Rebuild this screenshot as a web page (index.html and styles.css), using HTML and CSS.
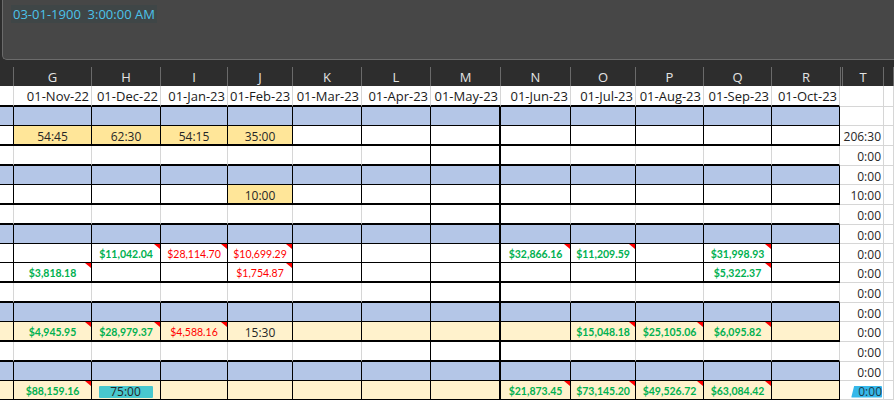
FILE: index.html
```html
<!DOCTYPE html>
<html lang="en">
<head>
  <meta charset="UTF-8">
  <title>Hours sheet</title>
  <link rel="stylesheet" href="styles.css">
</head>
<body>
  <div class="topbar">
    <div class="formula"><span class="formula-text">03-01-1900&nbsp; 3:00:00 AM</span></div>
  </div>
  <table class="sheet">
    <colgroup>
      <col style="width:14px">
      <col style="width:78px">
      <col style="width:69px">
      <col style="width:67px">
      <col style="width:65px">
      <col style="width:69px">
      <col style="width:69px">
      <col style="width:70px">
      <col style="width:70px">
      <col style="width:65px">
      <col style="width:68px">
      <col style="width:68px">
      <col style="width:68px">
      <col style="width:44px">
      <col style="width:10px">
    </colgroup>
    <thead>
      <tr>
        <th></th><th>G</th><th>H</th><th>I</th><th>J</th><th>K</th><th>L</th><th>M</th>
        <th>N</th><th>O</th><th>P</th><th>Q</th><th class="last">R</th><th class="hid">T</th><th></th>
      </tr>
    </thead>
    <tbody>
      <tr class="dates">
        <td></td><td>01-Nov-22</td><td>01-Dec-22</td><td>01-Jan-23</td><td>01-Feb-23</td><td>01-Mar-23</td><td>01-Apr-23</td>
        <td>01-May-23</td><td>01-Jun-23</td><td>01-Jul-23</td><td>01-Aug-23</td><td>01-Sep-23</td><td>01-Oct-23</td><td></td><td></td>
      </tr>
      <tr class="grp band thin">
        <td></td><td></td><td></td><td></td><td></td><td></td><td></td><td></td><td></td><td></td><td></td><td></td><td></td><td></td><td></td>
      </tr>
      <tr class="grp thick">
        <td></td><td class="gold">54:45</td><td class="gold">62:30</td><td class="gold">54:15</td><td class="gold">35:00</td>
        <td></td><td></td><td></td><td></td><td></td><td></td><td></td><td></td><td>206:30</td><td></td>
      </tr>
      <tr class="spacer thick">
        <td></td><td></td><td></td><td></td><td></td><td></td><td></td><td></td><td></td><td></td><td></td><td></td><td></td><td>0:00</td><td></td>
      </tr>
      <tr class="grp band thin">
        <td></td><td></td><td></td><td></td><td></td><td></td><td></td><td></td><td></td><td></td><td></td><td></td><td></td><td>0:00</td><td></td>
      </tr>
      <tr class="grp thick">
        <td></td><td></td><td></td><td></td><td class="gold">10:00</td><td></td><td></td><td></td><td></td><td></td><td></td><td></td><td></td><td>10:00</td><td></td>
      </tr>
      <tr class="spacer thick">
        <td></td><td></td><td></td><td></td><td></td><td></td><td></td><td></td><td></td><td></td><td></td><td></td><td></td><td>0:00</td><td></td>
      </tr>
      <tr class="grp band thin">
        <td></td><td></td><td></td><td></td><td></td><td></td><td></td><td></td><td></td><td></td><td></td><td></td><td></td><td>0:00</td><td></td>
      </tr>
      <tr class="grp thin">
        <td></td><td></td><td class="up note">$11,042.04</td><td class="down note">$28,114.70</td><td class="down note">$10,699.29</td>
        <td></td><td></td><td></td><td class="up note">$32,866.16</td><td class="up note">$11,209.59</td><td></td><td class="up note">$31,998.93</td><td></td><td>0:00</td><td></td>
      </tr>
      <tr class="grp thick">
        <td></td><td class="up note">$3,818.18</td><td></td><td></td><td class="down note">$1,754.87</td>
        <td></td><td></td><td></td><td></td><td></td><td></td><td class="up note">$5,322.37</td><td></td><td>0:00</td><td></td>
      </tr>
      <tr class="spacer thick">
        <td></td><td></td><td></td><td></td><td></td><td></td><td></td><td></td><td></td><td></td><td></td><td></td><td></td><td>0:00</td><td></td>
      </tr>
      <tr class="grp band thin">
        <td></td><td></td><td></td><td></td><td></td><td></td><td></td><td></td><td></td><td></td><td></td><td></td><td></td><td>0:00</td><td></td>
      </tr>
      <tr class="grp cream thick">
        <td></td><td class="up note">$4,945.95</td><td class="up note">$28,979.37</td><td class="down note">$4,588.16</td><td>15:30</td>
        <td></td><td></td><td></td><td></td><td class="up note">$15,048.18</td><td class="up note">$25,105.06</td><td class="up note">$6,095.82</td><td></td><td>0:00</td><td></td>
      </tr>
      <tr class="spacer thick">
        <td></td><td></td><td></td><td></td><td></td><td></td><td></td><td></td><td></td><td></td><td></td><td></td><td></td><td>0:00</td><td></td>
      </tr>
      <tr class="grp band thin">
        <td></td><td></td><td></td><td></td><td></td><td></td><td></td><td></td><td></td><td></td><td></td><td></td><td></td><td>0:00</td><td></td>
      </tr>
      <tr class="grp cream thin">
        <td></td><td class="up note">$88,159.16</td><td><span class="marker">75:00</span></td><td></td><td></td>
        <td></td><td></td><td></td><td class="up note">$21,873.45</td><td class="up note">$73,145.20</td><td class="up note">$49,526.72</td><td class="up note">$63,084.42</td><td></td>
        <td><span class="marker marker-blue">0:00</span></td><td></td>
      </tr>
    </tbody>
  </table>
</body>
</html>
```

FILE: styles.css
```css
* {
  box-sizing: border-box;
}

body {
  margin: 0;
  background: #fff;
  font-family: "Open Sans", sans-serif;
  overflow: hidden;
}

.topbar {
  background: #2d2d2d;
  padding: 0 0 7px 2px;
}

.formula {
  height: 60px;
  background: #474747;
  border: 1px solid #6b6b6b;
  border-top: 0;
  border-right: 0;
  border-bottom-left-radius: 5px;
  padding: 2px 0 0 8px;
}

.formula-text {
  display: inline-block;
  padding: 0 2px;
  background: #3f4647;
  color: #4cc3ea;
  font-size: 13px;
  line-height: 18px;
}

.sheet {
  width: 894px;
  table-layout: fixed;
  border-collapse: separate;
  border-spacing: 0;
}

.sheet th {
  height: 19px;
  padding: 0;
  background: #2d2d2d;
  color: #e4e4e4;
  font-size: 13px;
  font-weight: normal;
  border-right: 1px solid #6a6a6a;
}

.sheet th.last {
  border-right: 0;
}

.sheet th.hid {
  border-left: 3px double #6a6a6a;
}

.sheet tr {
  height: 19px;
}

.sheet tr.thick {
  height: 20px;
}

.sheet tr.dates {
  height: 21px;
}

.sheet td {
  position: relative;
  padding: 2px 2px 0;
  border-right: 1px solid #d6d6d6;
  border-bottom: 1px solid #d6d6d6;
  font-size: 12px;
  line-height: 15px;
  color: #262626;
  text-align: center;
  white-space: nowrap;
  overflow: visible;
}

.dates td {
  padding-top: 1px;
  font-size: 13px;
  color: #1a1a1a;
  text-align: right;
  border-bottom: 2px solid #000;
}

.grp td {
  border-right-color: #000;
}

.thin td {
  border-bottom-color: #000;
}

.thick td {
  border-bottom: 2px solid #000;
}

.band td {
  background: #b4c6e7;
}

.cream td {
  background: #fff2cc;
}

.sheet td.gold {
  background: #ffe699;
}

.spacer td:nth-child(7) {
  border-right-color: #000;
}

.grp td:nth-child(8),
.spacer td:nth-child(8) {
  border-right: 2px solid #000;
}

/* totals column and the strip after it stay plain */
.sheet td:nth-child(n+14) {
  background: #fff;
  border-right: 1px solid #d6d6d6;
  border-bottom: 1px solid #d6d6d6;
}

.sheet td:nth-child(14) {
  text-align: right;
  padding-right: 2px;
}

.sheet td.up,
.sheet td.down {
  padding-top: 3px;
  font-family: Lato, sans-serif;
  font-size: 10.5px;
}

.sheet td.up {
  color: #00b050;
  font-weight: 700;
}

.sheet td.down {
  color: #ff0000;
}

.note::after {
  content: "";
  position: absolute;
  top: 0;
  right: 0;
  border-top: 5px solid #ff0000;
  border-left: 6px solid transparent;
}

.marker {
  display: inline-block;
  padding: 0 12px 0 11px;
  line-height: 12px;
  background: #48c8ce;
  border-radius: 1px;
}

.marker-blue {
  padding: 0 0 0 7px;
  margin-right: -1px;
  background: #36b8ea;
  color: #1b3c4c;
  clip-path: polygon(3px 0, 100% 0, 100% 100%, 0 100%);
}
```
